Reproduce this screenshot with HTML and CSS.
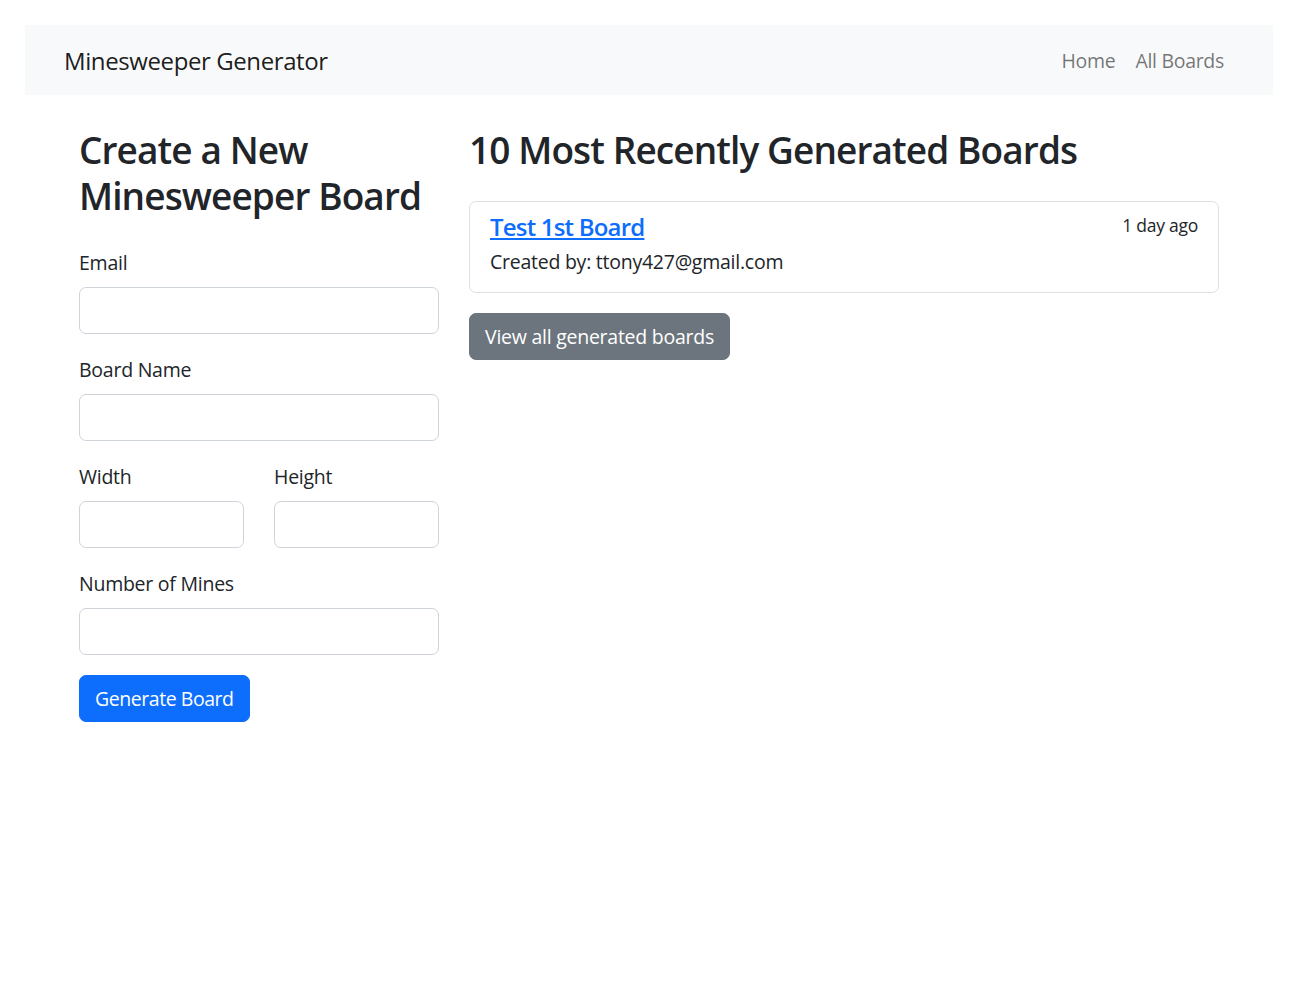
FILE: index.html
```
<!DOCTYPE html>
<html lang="en">
<head>
<meta charset="utf-8">
<title>Minesweeper Generator</title>
<link rel="stylesheet" href="styles.css">
</head>
<body>
<nav class="navbar">
  <div class="nav-inner">
    <a class="brand" href="#">Minesweeper Generator</a>
    <ul class="nav-links">
      <li><a class="nav-link" href="#">Home</a></li>
      <li><a class="nav-link" href="#">All Boards</a></li>
    </ul>
  </div>
</nav>
<main class="container">
  <section class="col-left">
    <h2 class="heading">Create a New Minesweeper Board</h2>
    <form class="form">
      <div class="field">
        <label class="label" for="email">Email</label>
        <input class="input" id="email" type="email">
      </div>
      <div class="field">
        <label class="label" for="name">Board Name</label>
        <input class="input" id="name" type="text">
      </div>
      <div class="field-row">
        <div class="field">
          <label class="label" for="width">Width</label>
          <input class="input" id="width" type="text">
        </div>
        <div class="field">
          <label class="label" for="height">Height</label>
          <input class="input" id="height" type="text">
        </div>
      </div>
      <div class="field">
        <label class="label" for="mines">Number of Mines</label>
        <input class="input" id="mines" type="text">
      </div>
      <button class="btn btn-primary" type="button">Generate Board</button>
    </form>
  </section>
  <section class="col-right">
    <h2 class="heading">10 Most Recently Generated Boards</h2>
    <div class="list">
      <div class="list-item">
        <div class="item-top">
          <h5 class="item-title"><a href="#">Test 1st Board</a></h5>
          <small class="item-time">1 day ago</small>
        </div>
        <p class="item-text">Created by: ttony427@gmail.com</p>
      </div>
    </div>
    <a class="btn btn-secondary view-all" href="#">View all generated boards</a>
  </section>
</main>
</body>
</html>
```

FILE: styles.css
```
* { box-sizing: border-box; }
html, body { margin: 0; }
body {
  padding: 25px;
  font-family: "Open Sans", "Noto Sans", sans-serif;
  font-size: 19.5px;
  letter-spacing: -0.25px;
  line-height: 30px;
  color: #212529;
  background: #fff;
}
.navbar {
  background: #f8f9fa;
  height: 70px;
  display: flex;
  align-items: center;
}
.nav-inner {
  width: 1170px;
  margin-left: 39px;
  padding-top: 2px;
  display: flex;
  align-items: center;
  justify-content: space-between;
}
.brand {
  font-size: 24px;
  letter-spacing: -0.4px;
  line-height: 38px;
  color: rgba(0,0,0,.9);
  text-decoration: none;
}
.nav-links {
  list-style: none;
  margin: 0;
  padding: 0;
  display: flex;
}
.nav-link {
  display: block;
  padding: 10px 10px;
  letter-spacing: -0.3px;
  color: rgba(0,0,0,.55);
  text-decoration: none;
}
.container {
  width: 1140px;
  margin-left: 54px;
  padding-top: 30px;
  display: flex;
  gap: 30px;
  align-items: flex-start;
}
.col-left { width: 360px; flex: none; }
.col-right { width: 750px; flex: none; }
.heading {
  margin: 0 0 28px;
  padding-top: 2px;
  font-size: 37px;
  letter-spacing: -0.9px;
  line-height: 46px;
  font-weight: 600;
}
.form { margin: 0; }
.field { margin-bottom: 20px; }
.field-row {
  display: flex;
  gap: 30px;
}
.field-row .field { flex: 1; }
.label {
  display: block;
  padding-top: 1px;
  margin-bottom: 9px;
}
.input {
  display: block;
  width: 100%;
  height: 47px;
  padding: 7px 15px;
  font: inherit;
  border: 1px solid #ced4da;
  border-radius: 7px;
  background: #fff;
}
.btn {
  display: inline-block;
  height: 47px;
  padding: 0 15px;
  font: inherit;
  letter-spacing: -0.25px;
  line-height: 45px;
  border: 1px solid transparent;
  border-radius: 7px;
  color: #fff;
  text-decoration: none;
  cursor: pointer;
}
.btn-primary { background: #0d6efd; border-color: #0d6efd; letter-spacing: -0.45px; }
.btn-secondary { background: #6c757d; border-color: #6c757d; }
.list {
  border: 1px solid #dfdfdf;
  border-radius: 7px;
}
.list-item { padding: 10px 20px; }
.item-top {
  display: flex;
  justify-content: space-between;
}
.item-title {
  margin: 0 0 5px;
  font-size: 24px;
  letter-spacing: -0.8px;
  line-height: 30px;
  font-weight: 600;
}
.item-title a { color: #0d6efd; }
.item-time { font-size: 17.5px; line-height: 26px; }
.item-text { margin: 0 0 5px; }
.view-all { margin-top: 20px; }
```
